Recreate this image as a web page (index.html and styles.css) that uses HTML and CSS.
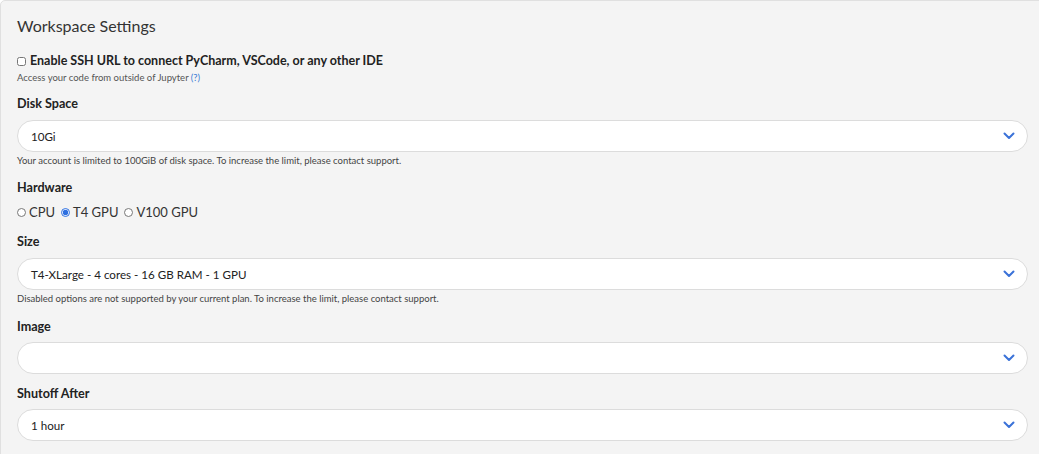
FILE: index.html
```html
<!DOCTYPE html>
<html>
<head>
<meta charset="utf-8">
<link rel="stylesheet" href="styles.css">
</head>
<body>
<div class="card">
  <h2 class="title">Workspace Settings</h2>

  <label class="check-row"><input type="checkbox" class="check"><span>Enable SSH URL to connect PyCharm, VSCode, or any other IDE</span></label>
  <div class="sub">Access your code from outside of Jupyter <a class="help-link">(?)</a></div>

  <div class="field f-disk">
    <div class="label">Disk Space</div>
    <div class="select"><span>10Gi</span><svg class="chev" width="12" height="8" viewBox="0 0 12 8"><path d="M1.5 1.5 L6 6 L10.5 1.5" fill="none" stroke="#3a72d8" stroke-width="2" stroke-linecap="round" stroke-linejoin="round"/></svg></div>
    <div class="help">Your account is limited to 100GiB of disk space. To increase the limit, please contact support.</div>
  </div>

  <div class="field f-hw">
    <div class="label">Hardware</div>
    <div class="radios">
      <label class="radio"><input type="radio" name="hw"><span>CPU</span></label>
      <label class="radio"><input type="radio" name="hw" checked><span>T4 GPU</span></label>
      <label class="radio"><input type="radio" name="hw"><span>V100 GPU</span></label>
    </div>
  </div>

  <div class="field f-size">
    <div class="label">Size</div>
    <div class="select"><span>T4-XLarge - 4 cores - 16 GB RAM - 1 GPU</span><svg class="chev" width="12" height="8" viewBox="0 0 12 8"><path d="M1.5 1.5 L6 6 L10.5 1.5" fill="none" stroke="#3a72d8" stroke-width="2" stroke-linecap="round" stroke-linejoin="round"/></svg></div>
    <div class="help">Disabled options are not supported by your current plan. To increase the limit, please contact support.</div>
  </div>

  <div class="field f-image">
    <div class="label">Image</div>
    <div class="select"><span></span><svg class="chev" width="12" height="8" viewBox="0 0 12 8"><path d="M1.5 1.5 L6 6 L10.5 1.5" fill="none" stroke="#3a72d8" stroke-width="2" stroke-linecap="round" stroke-linejoin="round"/></svg></div>
  </div>

  <div class="field f-shut">
    <div class="label">Shutoff After</div>
    <div class="select"><span>1 hour</span><svg class="chev" width="12" height="8" viewBox="0 0 12 8"><path d="M1.5 1.5 L6 6 L10.5 1.5" fill="none" stroke="#3a72d8" stroke-width="2" stroke-linecap="round" stroke-linejoin="round"/></svg></div>
  </div>
</div>
</body>
</html>
```
FILE: styles.css
```css
html, body {
  margin: 0;
  padding: 0;
  background: #ffffff;
  overflow: hidden;
}
body {
  font-family: Lato, "Open Sans", sans-serif;
  color: #333;
}
.card {
  background: #f4f4f4;
  border: 1px solid #e0e0e0;
  border-radius: 5px;
  margin-right: -6px;
  padding: 15px 16px 20px 16px;
  min-height: 460px;
  box-sizing: border-box;
}
.title {
  margin: 0;
  font-size: 16px;
  font-weight: 400;
  line-height: 20px;
  color: #333;
}
.check-row {
  display: flex;
  align-items: center;
  margin-top: 17px;
  line-height: 16px;
  font-size: 12.5px;
  font-weight: 700;
  color: #222;
}
.check {
  width: 9px;
  height: 9px;
  margin: 0 4px 0 0;
}
.sub {
  margin-top: 3px;
  font-size: 9.5px;
  line-height: 12px;
  color: #555;
}
.help-link {
  color: #3a7bd5;
}
.field {
  display: flex;
  flex-direction: column;
}
.label {
  font-size: 12.6px;
  font-weight: 700;
  line-height: 16px;
  color: #222;
}
.f-disk { margin-top: 12px; }
.f-hw { margin-top: 13px; }
.f-size { margin-top: 14px; }
.f-image { margin-top: 14px; }
.f-shut { margin-top: 12px; }
.f-image .label, .f-shut .label { margin-bottom: 7px; }
.f-disk .label, .f-size .label { margin-bottom: 8px; }
.select {
  display: flex;
  align-items: center;
  justify-content: space-between;
  height: 32px;
  box-sizing: border-box;
  background: #fff;
  border: 1px solid #dcdcdc;
  border-radius: 16px;
  padding: 0 12px 0 13px;
  font-size: 11.6px;
  color: #222;
}
.chev {
  display: block;
}
.help {
  margin-top: 3px;
  font-size: 9.5px;
  line-height: 12px;
  color: #444;
}
.radios {
  display: flex;
  align-items: center;
  gap: 6px;
  margin-top: 8px;
  line-height: 16px;
  font-size: 13px;
  color: #333;
}
.radio {
  display: flex;
  align-items: center;
}
.radio input {
  width: 9px;
  height: 9px;
  margin: 0 3px 0 0;
  accent-color: #2d6fe0;
}
```
